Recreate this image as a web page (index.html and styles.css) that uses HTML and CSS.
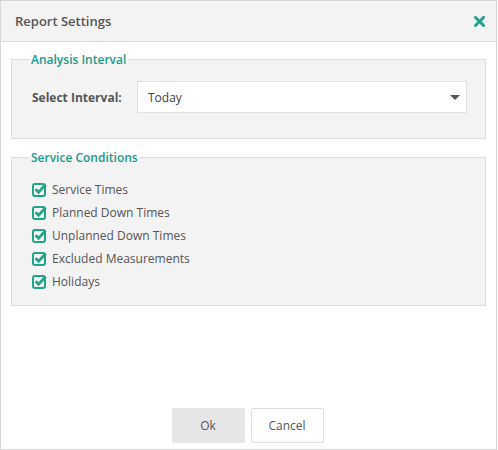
FILE: index.html
```html
<!DOCTYPE html>
<html lang="en">
<head>
    <meta charset="UTF-8">
    <title>Report Settings</title>
    <link rel="stylesheet" href="styles.css">
</head>
<body>
    <div class="dialog">
        <!-- Header -->
        <div class="dialog-header">
            <span class="dialog-title">Report Settings</span>
            <button class="close-btn" title="Close">
                <svg width="11" height="11" viewBox="0 0 11 11"><path d="M1.5 1.5l8 8M9.5 1.5l-8 8" stroke="#22a38a" stroke-width="3" stroke-linecap="square"/></svg>
            </button>
        </div>

        <div class="dialog-body">
            <!-- Analysis Interval -->
            <fieldset class="group">
                <legend>Analysis Interval</legend>
                <div class="interval-row">
                    <label class="interval-label" for="interval">Select Interval:</label>
                    <div class="select-box" id="interval">
                        <span>Today</span>
                        <span class="caret"></span>
                    </div>
                </div>
            </fieldset>

            <!-- Service Conditions -->
            <fieldset class="group conditions">
                <legend>Service Conditions</legend>
                <ul class="check-list">
                    <li><span class="check"></span>Service Times</li>
                    <li><span class="check"></span>Planned Down Times</li>
                    <li><span class="check"></span>Unplanned Down Times</li>
                    <li><span class="check"></span>Excluded Measurements</li>
                    <li><span class="check"></span>Holidays</li>
                </ul>
            </fieldset>
        </div>

        <!-- Footer -->
        <div class="dialog-footer">
            <button class="btn btn-ok">Ok</button>
            <button class="btn btn-cancel">Cancel</button>
        </div>
    </div>

    <script>
        // same icon for every checkbox
        var icon = '<svg width="16" height="15" viewBox="0 0 16 15">' +
            '<rect x="1" y="2" width="12" height="12" rx="2" fill="none" stroke="#22a38a" stroke-width="2"/>' +
            '<path d="M3.6 7.2l3 3 7-7.6" fill="none" stroke="#22a38a" stroke-width="2.8"/></svg>';
        document.querySelectorAll('.check').forEach(function (el) {
            el.innerHTML = icon;
        });
    </script>
</body>
</html>
```

FILE: styles.css
```css
/* General */
body {
    margin: 0;
    font-family: 'Open Sans', 'Liberation Sans', sans-serif;
    font-size: 12px;
    color: #555;
    background: #fff;
}

/* Dialog */
.dialog {
    width: 495px;
    height: 448px;
    border: 1px solid #d6d6d6;
    display: flex;
    flex-direction: column;
    background: #fff;
}

.dialog-header {
    height: 40px;
    background-color: #f3f3f3;
    border-bottom: 1px solid #dcdcdc;
    display: flex;
    align-items: center;
    justify-content: space-between;
    padding: 0 11px 0 14px;
}

.dialog-title {
    font-size: 13px;
    font-weight: 600;
    color: #555;
}

.close-btn {
    background: none;
    border: none;
    padding: 0;
    cursor: pointer;
    display: flex;
}

.dialog-body {
    flex: 1;
    padding: 9px 10px 0 10px;
}

/* Groups */
.group {
    margin: 0 0 10px 0;
    padding: 0 18px 0 20px;
    border: 1px solid #dcdcdc;
    background-color: #f3f3f3;
    height: 88px;
    min-width: 0;
    box-sizing: border-box;
}

.group legend {
    padding: 0 2px;
    margin-left: -3px;
    font-size: 12px;
    font-weight: 600;
    color: #1c9c8c;
}

.interval-row {
    display: flex;
    align-items: center;
    margin-top: 13px;
}

.interval-label {
    width: 105px;
    flex-shrink: 0;
    font-weight: 700;
    font-size: 12px;
    color: #555;
}

.select-box {
    width: 330px;
    height: 32px;
    box-sizing: border-box;
    background: #fff;
    border: 1px solid #e1e1e1;
    display: flex;
    align-items: center;
    justify-content: space-between;
    padding: 0 6px 0 10px;
    font-size: 12px;
    color: #444;
}

.caret {
    width: 0;
    height: 0;
    border-left: 5px solid transparent;
    border-right: 5px solid transparent;
    border-top: 5px solid #555;
}

/* Checkboxes */
.conditions {
    height: 157px;
}

.check-list {
    list-style: none;
    margin: 12px 0 0 0;
    padding: 0;
}

.check-list li {
    display: flex;
    align-items: center;
    height: 23px;
    font-size: 12px;
    color: #555;
}

.check {
    display: flex;
    margin-right: 4px;
}

/* Footer */
.dialog-footer {
    display: flex;
    justify-content: center;
    gap: 6px;
    padding: 0 2px 6px 0;
}

.btn {
    width: 73px;
    height: 35px;
    border-radius: 2px;
    font-family: inherit;
    font-size: 12px;
    color: #555;
    cursor: pointer;
}

.btn-ok {
    background-color: #e6e6e6;
    border: 1px solid #e6e6e6;
}

.btn-cancel {
    background-color: #fff;
    border: 1px solid #dedede;
}
```
